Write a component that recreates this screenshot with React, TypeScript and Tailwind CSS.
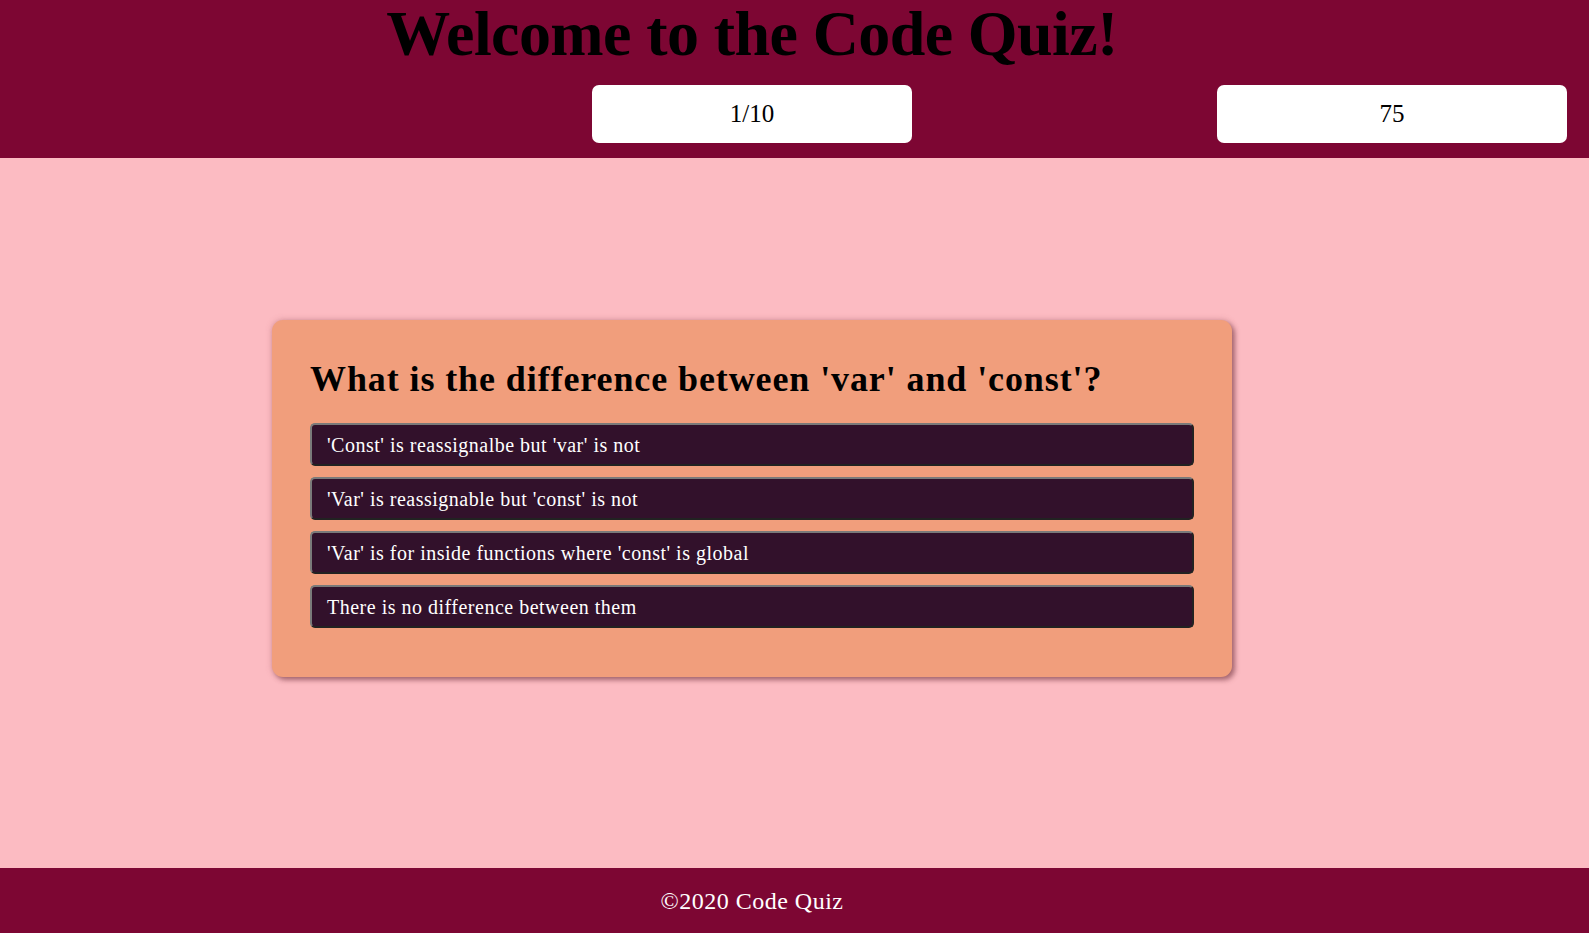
const answers = [
  "'Const' is reassignalbe but 'var' is not",
  "'Var' is reassignable but 'const' is not",
  "'Var' is for inside functions where 'const' is global",
  'There is no difference between them',
]

export default function App() {
  return (
    <div className="flex min-h-[933px] flex-col bg-[#fcbbc2] font-['Liberation_Serif',serif]">
      <header className="h-[158px] bg-[#7d0633]">
        <h1 className="w-[1504px] text-center text-[64px] font-bold leading-[67px] tracking-[-0.6px] text-black">
          Welcome to the Code Quiz!
        </h1>
        <div className="mt-[18px] flex">
          <div className="ml-[592px] flex h-[58px] w-[320px] items-center justify-center rounded-[7px] bg-white text-[25px] text-black">
            1/10
          </div>
          <div className="ml-[305px] flex h-[58px] w-[350px] items-center justify-center rounded-[7px] bg-white text-[25px] text-black">
            75
          </div>
        </div>
      </header>

      <main className="flex h-[710px] w-[1504px] items-start justify-center pt-[162px]">
        <div className="w-[960px] rounded-[11px] bg-[#f19e7c] px-[38px] pt-[37px] pb-[49px] shadow-[3px_3px_5px_rgba(110,50,60,0.55),0_0_6px_rgba(150,80,90,0.35)]">
          <h2 className="text-[36px] font-bold leading-[44px] tracking-[0.9px] text-black">
            What is the difference between 'var' and 'const'?
          </h2>
          <div className="mt-[22px] flex flex-col gap-[11px]">
            {answers.map((a) => (
              <button
                key={a}
                className="h-[43px] w-full rounded-[5px] border-2 border-t-[#7a7a7a] border-l-[#7a7a7a] border-r-[#222] border-b-[#222] bg-[#32112b] pl-[15px] text-left text-[20px] tracking-[0.5px] text-white"
              >
                {a}
              </button>
            ))}
          </div>
        </div>
      </main>

      <footer className="flex h-[65px] w-full items-center bg-[#7d0633]">
        <p className="w-[1504px] text-center text-[24px] tracking-[0.5px] text-white">©2020 Code Quiz</p>
      </footer>
    </div>
  )
}
